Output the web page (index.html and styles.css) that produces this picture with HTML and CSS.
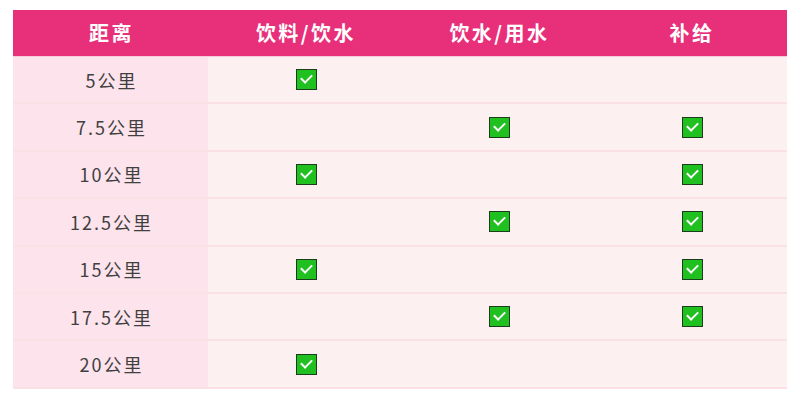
FILE: index.html
```html
<!DOCTYPE html>
<html lang="zh">
<head>
<meta charset="utf-8">
<link rel="stylesheet" href="styles.css">
</head>
<body>
<div class="table">
  <div class="row head">
    <div class="cell">距离</div>
    <div class="cell">饮料/饮水</div>
    <div class="cell">饮水/用水</div>
    <div class="cell">补给</div>
  </div>
  <div class="row">
    <div class="cell dist">5公里</div>
    <div class="cell"><span class="chk"></span></div>
    <div class="cell"></div>
    <div class="cell"></div>
  </div>
  <div class="row">
    <div class="cell dist">7.5公里</div>
    <div class="cell"></div>
    <div class="cell"><span class="chk"></span></div>
    <div class="cell"><span class="chk"></span></div>
  </div>
  <div class="row">
    <div class="cell dist">10公里</div>
    <div class="cell"><span class="chk"></span></div>
    <div class="cell"></div>
    <div class="cell"><span class="chk"></span></div>
  </div>
  <div class="row">
    <div class="cell dist">12.5公里</div>
    <div class="cell"></div>
    <div class="cell"><span class="chk"></span></div>
    <div class="cell"><span class="chk"></span></div>
  </div>
  <div class="row">
    <div class="cell dist">15公里</div>
    <div class="cell"><span class="chk"></span></div>
    <div class="cell"></div>
    <div class="cell"><span class="chk"></span></div>
  </div>
  <div class="row">
    <div class="cell dist">17.5公里</div>
    <div class="cell"></div>
    <div class="cell"><span class="chk"></span></div>
    <div class="cell"><span class="chk"></span></div>
  </div>
  <div class="row">
    <div class="cell dist">20公里</div>
    <div class="cell"><span class="chk"></span></div>
    <div class="cell"></div>
    <div class="cell"></div>
  </div>
</div>
</body>
</html>
```
FILE: styles.css
```css
html, body {
  margin: 0;
  padding: 0;
  background: #ffffff;
}
body {
  padding: 10px 13px 0 13px;
  font-family: "Noto Sans CJK SC", "Noto Sans", sans-serif;
}
.table {
  width: 774px;
}
.row {
  display: grid;
  grid-template-columns: 195px 194px 193px 192px;
  height: 47.4px;
  box-sizing: border-box;
  border-bottom: 2px solid #fbe0e6;
}
.row.head {
  height: 47px;
  background: #e8307a;
  border-bottom: 1px solid #f7c9da;
}
.cell {
  display: flex;
  align-items: center;
  justify-content: center;
  background: #fdf0f1;
  font-size: 18px;
  color: #404040;
  letter-spacing: 2px;
  padding-left: 2px;
}
.head .cell {
  background: transparent;
  color: #ffffff;
  font-weight: 700;
  font-size: 20px;
  letter-spacing: 2.5px;
  padding-bottom: 2px;
}
.cell.dist {
  background: #fde3ec;
}
.chk {
  display: block;
  width: 19px;
  height: 19px;
  background: #20c020;
  border: 1px solid #1b3d1b;
  position: relative;
}
.chk::after {
  content: "";
  position: absolute;
  top: 4px;
  left: 4px;
  width: 9px;
  height: 5px;
  border-left: 2.5px solid #ffffff;
  border-bottom: 2.5px solid #ffffff;
  transform: rotate(-45deg);
  transform-origin: center;
}
```
